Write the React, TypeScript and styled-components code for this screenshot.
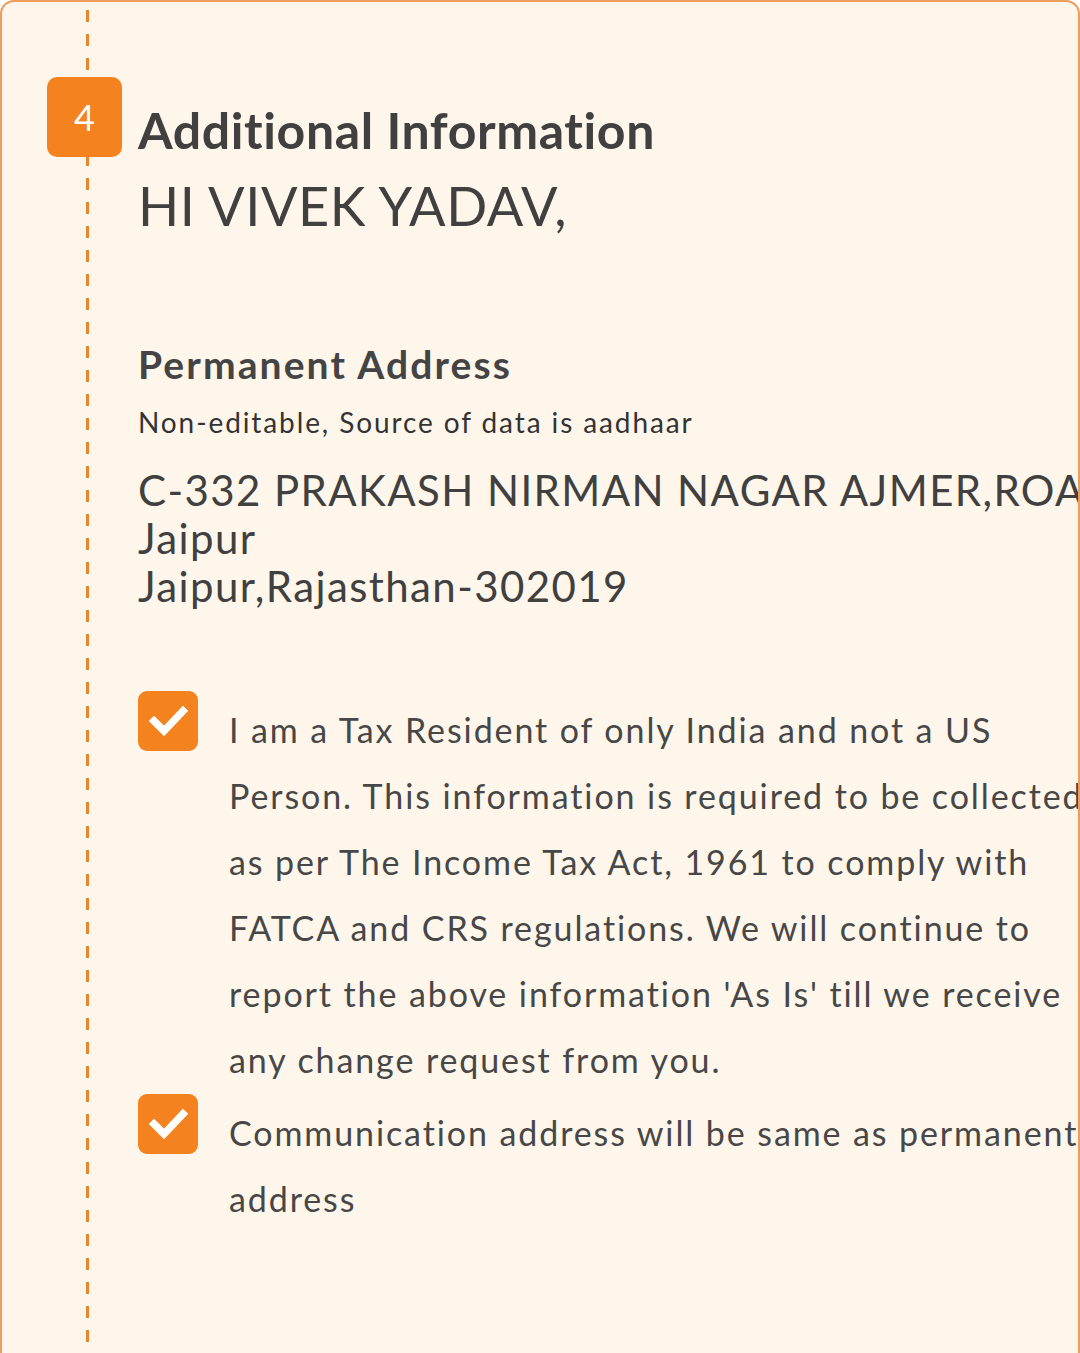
import React from "react";
import styled, { createGlobalStyle } from "styled-components";

const GlobalStyle = createGlobalStyle`
  html, body {
    margin: 0;
    padding: 0;
    background: #ffffff;
  }
  body {
    font-family: Lato, "Open Sans", "Noto Sans", sans-serif;
    color: #424242;
  }
`;

const Card = styled.section`
  box-sizing: border-box;
  width: 1080px;
  min-height: 1420px;
  display: grid;
  grid-template-columns: 136px 960px;
  background: #fff6eb;
  border: 2px solid #ec9d5c;
  border-bottom: none;
  border-radius: 14px 14px 0 0;
  overflow: hidden;
`;

const Rail = styled.div`
  background-image: repeating-linear-gradient(
    to bottom,
    #f08329 0px,
    #f08329 12px,
    transparent 12px,
    transparent 24px
  );
  background-repeat: no-repeat;
  background-size: 3px 100%;
  background-position: 84px 8px;
`;

const StepBadge = styled.div`
  box-sizing: border-box;
  margin: 75px 0 0 45px;
  width: 75px;
  height: 80px;
  border-radius: 10px;
  background: #f3821f;
  color: #ffffff;
  display: flex;
  align-items: center;
  justify-content: center;
  font-size: 36px;
  font-weight: 400;
`;

const Main = styled.div`
  display: flex;
  flex-direction: column;
  padding-top: 98px;
`;

const Title = styled.h1`
  margin: 0;
  font-size: 50px;
  line-height: 1.2;
  font-weight: 700;
  letter-spacing: 0.6px;
  color: #404040;
`;

const Greeting = styled.p`
  margin: 14px 0 0;
  font-size: 54px;
  line-height: 1.2;
  font-weight: 400;
  letter-spacing: 0.6px;
  color: #404040;
`;

const SectionTitle = styled.h2`
  margin: 102px 0 0;
  font-size: 39px;
  line-height: 1.2;
  font-weight: 700;
  letter-spacing: 2.1px;
  color: #444444;
`;

const Note = styled.p`
  margin: 18px 0 0;
  font-size: 28px;
  line-height: 1.2;
  font-weight: 400;
  letter-spacing: 1.9px;
  color: #333333;
`;

const AddressBlock = styled.div`
  margin-top: 27px;
  display: flex;
  flex-direction: column;
`;

const AddressLine = styled.span`
  font-size: 42px;
  line-height: 48px;
  letter-spacing: 1.4px;
  white-space: nowrap;
  color: #404040;
`;

const ConsentList = styled.div`
  margin-top: 81px;
  display: flex;
  flex-direction: column;
  gap: 1px;
`;

const ConsentRow = styled.label`
  display: flex;
  align-items: flex-start;
  gap: 31px;
`;

const CheckBox = styled.span`
  flex: none;
  width: 60px;
  height: 60px;
  border-radius: 9px;
  background: #f3821f;
  display: flex;
  align-items: center;
  justify-content: center;
`;

const ConsentText = styled.p`
  margin: 0;
  padding-top: 6px;
  width: 864px;
  font-size: 34px;
  line-height: 66px;
  letter-spacing: 1.9px;
  color: #474747;
`;

const Check = () => (
  <svg width="60" height="60" viewBox="0 0 60 60" aria-hidden="true">
    <path
      d="M16 30 L26 40 L45 20"
      fill="none"
      stroke="#ffffff"
      strokeWidth="7.5"
      strokeLinecap="square"
      strokeLinejoin="miter"
    />
  </svg>
);

export default function App() {
  return (
    <>
      <GlobalStyle />
      <Card>
        <Rail>
          <StepBadge>4</StepBadge>
        </Rail>
        <Main>
          <Title>Additional Information</Title>
          <Greeting>HI VIVEK YADAV,</Greeting>
          <SectionTitle>Permanent Address</SectionTitle>
          <Note>Non-editable, Source of data is aadhaar</Note>
          <AddressBlock>
            <AddressLine>C-332 PRAKASH NIRMAN NAGAR AJMER,ROAD</AddressLine>
            <AddressLine>Jaipur</AddressLine>
            <AddressLine>Jaipur,Rajasthan-302019</AddressLine>
          </AddressBlock>
          <ConsentList>
            <ConsentRow>
              <CheckBox>
                <Check />
              </CheckBox>
              <ConsentText>
                I am a Tax Resident of only India and not a US Person. This
                information is required to be collected as per The Income Tax
                Act, 1961 to comply with FATCA and CRS regulations. We will
                continue to report the above information 'As Is' till we
                receive any change request from you.
              </ConsentText>
            </ConsentRow>
            <ConsentRow>
              <CheckBox>
                <Check />
              </CheckBox>
              <ConsentText>
                Communication address will be same as permanent address
              </ConsentText>
            </ConsentRow>
          </ConsentList>
        </Main>
      </Card>
    </>
  );
}
